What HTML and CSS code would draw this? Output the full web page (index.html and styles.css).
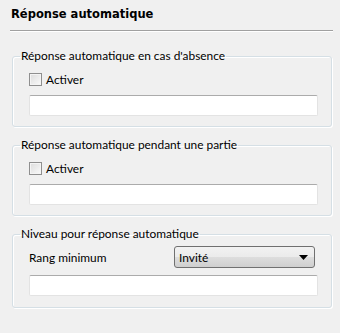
FILE: index.html
```html
<!DOCTYPE html>
<html lang="fr">
<head>
  <meta charset="UTF-8" />
  <title>Réponse automatique</title>
  <link rel="stylesheet" href="styles.css">
</head>
<body>

  <div class="page">
    <h1 class="title">Réponse automatique</h1>
    <div class="rule"></div>

    <fieldset class="group">
      <legend>Réponse automatique en cas d'absence</legend>
      <label class="check"><span class="box"></span>Activer</label>
      <div class="field"></div>
    </fieldset>

    <fieldset class="group">
      <legend>Réponse automatique pendant une partie</legend>
      <label class="check"><span class="box"></span>Activer</label>
      <div class="field"></div>
    </fieldset>

    <fieldset class="group level">
      <legend>Niveau pour réponse automatique</legend>
      <div class="row">
        <span class="row-label">Rang minimum</span>
        <div class="select">
          <span>Invité</span>
          <svg width="9" height="5" viewBox="0 0 9 5"><path d="M0 0h9L4.5 5z" fill="#000"/></svg>
        </div>
      </div>
      <div class="field"></div>
    </fieldset>
  </div>

</body>
</html>
```

FILE: styles.css
```css
body {
  margin: 0;
  background-color: #f0f0f0;
  font-family: Lato, "Open Sans", sans-serif;
  font-size: 11.9px;
  color: #000;
}

.page {
  padding: 6px 7px 0 10px;
}

.title {
  margin: 0 0 0 1px;
  font-family: "DejaVu Sans", sans-serif;
  font-size: 11.5px;
  font-weight: bold;
  line-height: 16px;
  height: 24px;
}

.rule {
  height: 1px;
  background-color: #a0a0a0;
  border-bottom: 1px solid #fff;
  margin-bottom: 16px;
}

.group {
  margin: 0 1px 10px 2px;
  padding: 7px 13px 10px 16px;
  border: 1px solid #d5dfe5;
  border-radius: 3px;
  box-shadow: inset 1px 1px 0 #fff, 1px 1px 0 #fff;
}

.group legend {
  padding: 0 1px;
  margin-left: -9px;
  line-height: 16px;
}

.check {
  display: flex;
  align-items: center;
  gap: 4px;
  height: 16px;
}

.box {
  width: 11px;
  height: 11px;
  border: 1px solid #8f8f8f;
  background: linear-gradient(135deg, #dcdcdc, #fafafa);
  box-shadow: inset 0 0 0 1px #f4f4f4;
}

.field {
  margin-top: 8px;
  height: 19px;
  background-color: #fff;
  border: 1px solid #e3e3e3;
  border-top-color: #ababab;
  border-radius: 2px;
}

.level {
  padding-top: 4px;
  padding-bottom: 11px;
}

.row {
  display: flex;
  align-items: center;
  justify-content: space-between;
  height: 22px;
  padding-right: 3px;
}

.select {
  box-sizing: border-box;
  width: 141px;
  height: 22px;
  display: flex;
  align-items: center;
  justify-content: space-between;
  padding: 0 6px 0 4px;
  border: 1px solid #707070;
  border-radius: 3px;
  background: linear-gradient(#f2f2f2 0%, #ebebeb 50%, #dddddd 51%, #cfcfcf 100%);
}

.row + .field {
  margin-top: 7px;
}
```
